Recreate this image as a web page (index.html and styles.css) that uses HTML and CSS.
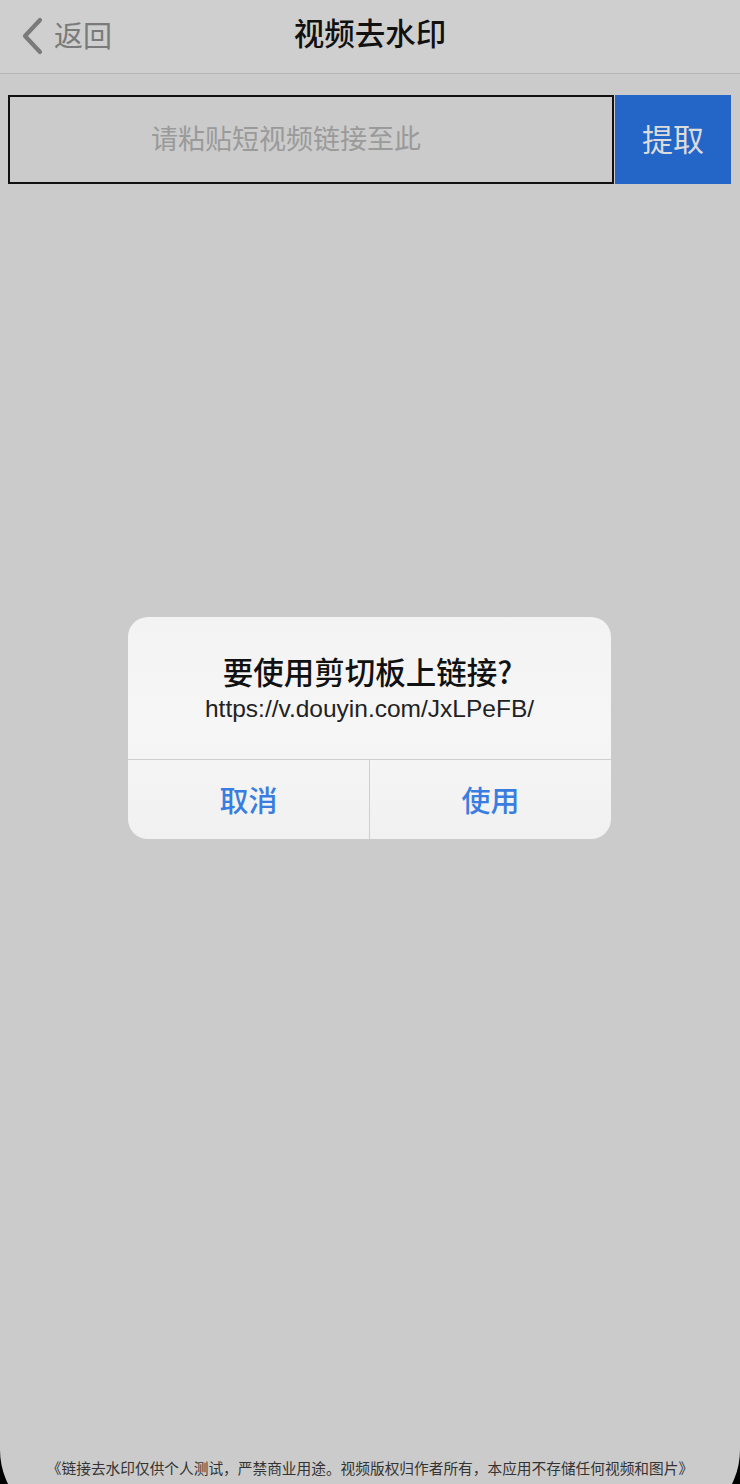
FILE: index.html
```html
<!DOCTYPE html>
<html lang="zh-CN">
<head>
<meta charset="utf-8">
<title>视频去水印</title>
<link rel="stylesheet" href="styles.css">
</head>
<body>
<div class="screen">
  <header class="navbar">
    <div class="back">
      <svg class="chev" width="24" height="38" viewBox="0 0 24 38"><path d="M20 3 L5 19 L20 35" fill="none" stroke="#7a7a7a" stroke-width="4.2" stroke-linecap="round" stroke-linejoin="round"/></svg>
      <span class="back-text">返回</span>
    </div>
    <h1 class="title">视频去水印</h1>
  </header>
  <div class="search">
    <div class="input">请粘贴短视频链接至此</div>
    <div class="btn">提取</div>
  </div>
  <div class="spacer"></div>
  <footer class="footer">《链接去水印仅供个人测试，严禁商业用途。视频版权归作者所有，本应用不存储任何视频和图片》</footer>

  <div class="alert">
    <div class="alert-body">
      <div class="alert-title">要使用剪切板上链接?</div>
      <div class="alert-msg">https://v.douyin.com/JxLPeFB/</div>
    </div>
    <div class="alert-actions">
      <div class="action">取消</div>
      <div class="action">使用</div>
    </div>
  </div>
</div>
<div class="bezel"></div>
</body>
</html>
```
FILE: styles.css
```css
html, body {
  margin: 0;
  padding: 0;
}
body {
  background: #cbcbcb;
  font-family: "Noto Sans CJK SC", "Noto Sans", sans-serif;
  width: 740px;
  height: 1484px;
  overflow: hidden;
  position: relative;
}
.screen {
  display: flex;
  flex-direction: column;
  height: 1484px;
  position: relative;
}
.navbar {
  height: 73px;
  border-bottom: 1.5px solid #b6b6b6;
  background: #cfcfcf;
  display: flex;
  align-items: center;
  justify-content: center;
  position: relative;
  flex: none;
}
.back {
  position: absolute;
  left: 20px;
  top: 0;
  height: 73px;
  display: flex;
  align-items: center;
  gap: 10px;
}
.chev { display: block; margin-top: -2px; }
.back-text {
  color: #7a7a7a;
  font-size: 29px;
  line-height: 1;
  margin-top: -4px;
}
.title {
  margin: 0;
  font-size: 30.5px;
  font-weight: 500;
  color: #111;
  line-height: 1;
  margin-top: -9px;
}
.search {
  display: flex;
  margin: 21px 9px 0 8px;
  height: 89px;
  flex: none;
}
.input {
  flex: 1;
  border: 2px solid #111;
  display: flex;
  align-items: center;
  justify-content: center;
  color: #9a9a9a;
  font-size: 27px;
  box-sizing: border-box;
  padding-bottom: 4px;
  padding-right: 50px;
}
.btn {
  width: 116px;
  margin-left: 1px;
  background: #2466c8;
  color: #dcdcdc;
  font-size: 31px;
  display: flex;
  align-items: center;
  justify-content: center;
  padding-bottom: 4px;
  box-sizing: border-box;
}
.spacer { flex: 1; }
.footer {
  flex: none;
  text-align: center;
  font-size: 14.7px;
  color: #333;
  line-height: 20px;
  padding-bottom: 6px;
  white-space: nowrap;
}
.alert {
  position: absolute;
  top: 617px;
  left: 128px;
  width: 483px;
  height: 222px;
  border-radius: 20px;
  background: linear-gradient(180deg, #f3f3f3 0%, #f6f6f6 50%, #f1f1f1 100%);
  display: flex;
  flex-direction: column;
  overflow: hidden;
}
.alert-body {
  height: 143px;
  border-bottom: 1px solid #cfcfcf;
  display: flex;
  flex-direction: column;
  align-items: center;
  box-sizing: border-box;
  padding-top: 34px;
}
.alert-title {
  font-size: 30.5px;
  font-weight: 500;
  color: #111;
  line-height: 40px;
  padding-right: 4px;
}
.alert-msg {
  font-family: "Liberation Sans", Arial, sans-serif;
  font-size: 24.5px;
  color: #222;
  line-height: 28px;
  margin-top: 4px;
}
.alert-actions {
  flex: 1;
  display: flex;
}
.action {
  flex: 1;
  display: flex;
  align-items: center;
  justify-content: center;
  font-size: 29px;
  font-weight: 500;
  color: #3a7de0;
  padding-bottom: 2px;
}
.action + .action {
  border-left: 1px solid #cfcfcf;
}
.bezel {
  position: absolute;
  left: 0;
  top: 0;
  width: 740px;
  height: 1526px;
  border-radius: 0 0 76px 76px;
  box-shadow: 0 0 0 200px #000;
  pointer-events: none;
}
```
